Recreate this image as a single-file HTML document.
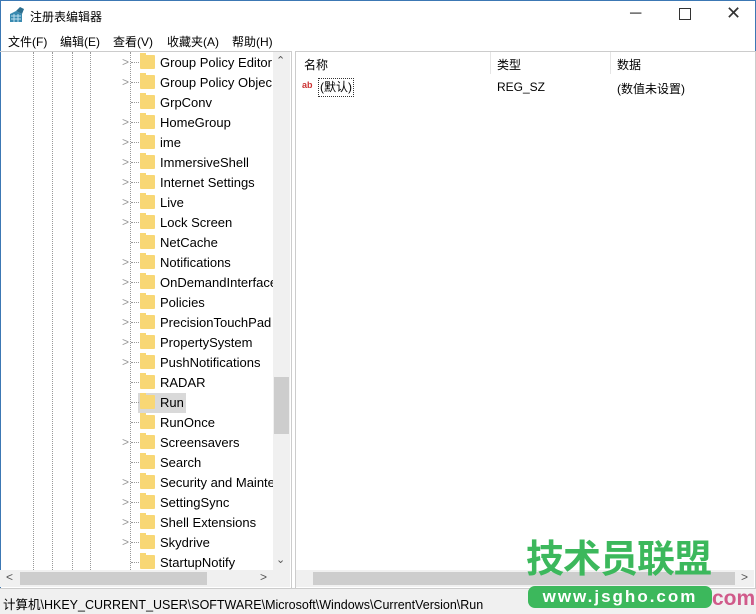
<!DOCTYPE html><html><head><meta charset="utf-8"><style>
body{margin:0;width:756px;height:613px;position:relative;overflow:hidden;background:#fff;font-family:"Liberation Sans","Noto Sans CJK SC",sans-serif;font-size:13px;color:#000}
.a{position:absolute}
.m{position:absolute;top:33px;font-size:12px}
.row{position:absolute;left:0;height:20px;line-height:20px;width:273px}
.row .f{position:absolute;left:140px;top:3px;width:15px;height:14px;background:#f8d775;border-radius:1px}
.row .f:before{content:"";position:absolute;left:0;top:-2px;width:6px;height:3px;background:#f8d775}
.row .t{position:absolute;left:160px;top:1px;white-space:nowrap}
.row .c{position:absolute;left:122px;color:#999;font-size:12px}
.row .d{position:absolute;left:131px;top:10px;width:8px;border-top:1px dotted #999}
.vl{position:absolute;top:52px;height:518px;border-left:1px dotted #999}
</style></head><body>
<div class="a" style="left:0;top:0;width:756px;height:613px;border:1px solid #3c78b4;box-sizing:border-box"></div>
<svg class="a" style="left:8px;top:6px" width="18" height="18"><path d="M2 16 L2 8 L8 5 L14 8 L14 16Z" fill="#3a8ab0"/><path d="M8 5 L12 1 L16 3 L14 8" fill="#2c6f8f"/><path d="M3 10h10M3 13h10M6 8v8M10 8v8" stroke="#bde" stroke-width="1"/></svg>
<div class="a" style="left:30px;top:8px;font-size:12px">注册表编辑器</div>
<div class="a" style="left:630px;top:5px;font-size:16px;color:#333">─</div>
<div class="a" style="left:679px;top:8px;width:10px;height:10px;border:1px solid #333"></div>
<div class="a" style="left:726px;top:3px;font-size:18px;color:#333">✕</div>
<div class="m" style="left:8px">文件(F)</div><div class="m" style="left:60px">编辑(E)</div><div class="m" style="left:113px">查看(V)</div><div class="m" style="left:167px">收藏夹(A)</div><div class="m" style="left:232px">帮助(H)</div>
<div class="a" style="left:0;top:51px;width:291px;height:537px;border-top:1px solid #ccc;border-right:1px solid #ccc"></div>
<div class="a" style="left:295px;top:51px;width:459px;height:537px;border:1px solid #ccc;border-bottom:none"></div>
<div class="vl" style="left:33px"></div><div class="vl" style="left:52px"></div><div class="vl" style="left:72px"></div><div class="vl" style="left:90px"></div><div class="vl" style="left:130px"></div>
<div class="a" style="left:138px;top:393px;width:48px;height:20px;background:#d9d9d9"></div>
<div id="tree"></div>
<script>
var n=[["Group Policy Editor",1],["Group Policy Objec",1],["GrpConv",0],["HomeGroup",1],["ime",1],["ImmersiveShell",1],["Internet Settings",1],["Live",1],["Lock Screen",1],["NetCache",0],["Notifications",1],["OnDemandInterface",1],["Policies",1],["PrecisionTouchPad",1],["PropertySystem",1],["PushNotifications",1],["RADAR",0],["Run",0],["RunOnce",0],["Screensavers",1],["Search",0],["Security and Mainte",1],["SettingSync",1],["Shell Extensions",1],["Skydrive",1],["StartupNotify",0]];
var h="";n.forEach(function(e,i){h+='<div class="row" style="top:'+(52+i*20)+'px;overflow:hidden">'+(e[1]?'<span class="c">&gt;</span>':'')+'<div class="d"></div><div class="f"></div><span class="t">'+e[0]+'</span></div>'});
document.getElementById("tree").innerHTML=h;
</script>
<div class="a" style="left:273px;top:52px;width:17px;height:518px;background:#f0f0f0"></div>
<div class="a" style="left:274px;top:377px;width:15px;height:57px;background:#cdcdcd"></div>
<div class="a" style="left:276px;top:54px;font-size:11px;color:#555">⌃</div>
<div class="a" style="left:276px;top:553px;font-size:11px;color:#555">⌄</div>
<div class="a" style="left:0;top:570px;width:290px;height:17px;background:#f0f0f0"></div>
<div class="a" style="left:20px;top:572px;width:187px;height:13px;background:#cdcdcd"></div>
<div class="a" style="left:6px;top:570px;font-size:12px;color:#555">&lt;</div>
<div class="a" style="left:260px;top:570px;font-size:12px;color:#555">&gt;</div>
<div class="a" style="left:304px;top:56px;font-size:12px">名称</div>
<div class="a" style="left:490px;top:52px;height:22px;border-left:1px solid #e5e5e5"></div>
<div class="a" style="left:497px;top:56px;font-size:12px">类型</div>
<div class="a" style="left:610px;top:52px;height:22px;border-left:1px solid #e5e5e5"></div>
<div class="a" style="left:617px;top:56px;font-size:12px">数据</div>
<div class="a" style="left:302px;top:80px;width:14px;height:13px;font-size:9px;font-weight:bold;color:#c33;line-height:11px">ab</div>
<div class="a" style="left:318px;top:78px;border:1px dotted #333;padding:0 1px;line-height:17px;font-size:12px">(默认)</div>
<div class="a" style="left:497px;top:80px;font-size:12px">REG_SZ</div>
<div class="a" style="left:617px;top:80px;font-size:12px">(数值未设置)</div>
<div class="a" style="left:296px;top:570px;width:458px;height:17px;background:#f0f0f0"></div>
<div class="a" style="left:313px;top:572px;width:422px;height:13px;background:#cdcdcd"></div>
<div class="a" style="left:741px;top:570px;font-size:12px;color:#555">&gt;</div>
<div class="a" style="left:0;top:588px;width:756px;height:25px;background:#f0f0f0;border-top:1px solid #ccc"></div>
<div class="a" style="left:3px;top:594px;white-space:nowrap;font-size:12.5px">计算机\HKEY_CURRENT_USER\SOFTWARE\Microsoft\Windows\CurrentVersion\Run</div>
<div class="a" style="left:526px;top:538px;font-size:38px;font-weight:bold;color:#3cb85c;letter-spacing:-1px;line-height:44px">技术员联盟</div>
<div class="a" style="left:528px;top:586px;width:184px;height:22px;background:#3cb85c;border-radius:7px;color:#fff;font-weight:bold;font-size:17px;text-align:center;line-height:22px;letter-spacing:2px">www.jsgho.com</div>
<div class="a" style="left:712px;top:588px;color:#d05a8a;font-size:21px;font-weight:bold;line-height:22px">com</div>
</body></html>
